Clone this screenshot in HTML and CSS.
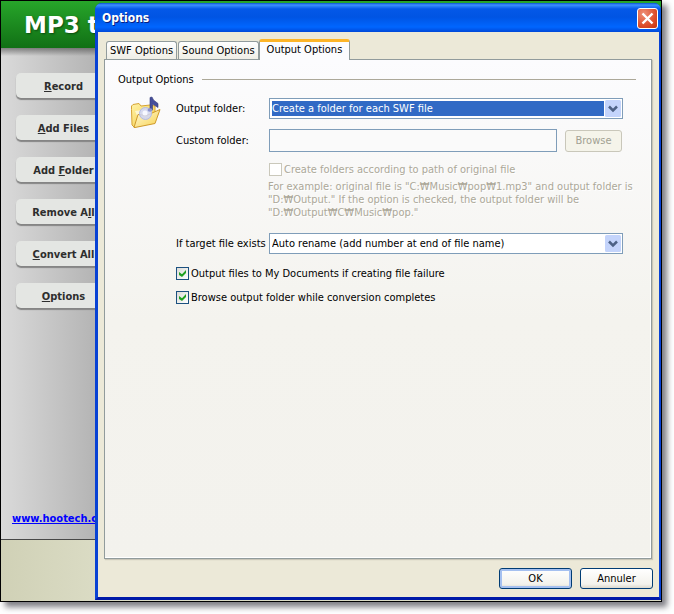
FILE: index.html
```html
<!DOCTYPE html>
<html lang="en">
<head>
<meta charset="utf-8">
<title>Options</title>
<link rel="stylesheet" href="styles.css">
</head>
<body>
<div class="app">
  <header class="app-header"><h1>MP3 t</h1></header>
  <aside class="sidebar">
    <nav class="actions">
      <button type="button"><u>R</u>ecord</button>
      <button type="button"><u>A</u>dd Files</button>
      <button type="button">Add <u>F</u>older</button>
      <button type="button">Remove A<u>l</u>l</button>
      <button type="button"><u>C</u>onvert All</button>
      <button type="button"><u>O</u>ptions</button>
    </nav>
    <a class="site-link" href="#">www.hootech.c</a>
  </aside>
  <footer class="app-footer"></footer>

  <section class="dialog" role="dialog" aria-labelledby="dialog-title">
    <div class="titlebar">
      <h2 id="dialog-title">Options</h2>
      <button class="close" type="button" aria-label="Close">
        <svg width="13" height="13" viewBox="0 0 13 13"><path d="M1.5 1.5 11.5 11.5M11.5 1.5 1.5 11.5" stroke="#fff" stroke-width="2.4" fill="none"/></svg>
      </button>
    </div>
    <form class="dialog-body">
      <div class="tabs" role="tablist">
        <button class="tab" type="button" role="tab">SWF Options</button>
        <button class="tab" type="button" role="tab">Sound Options</button>
        <button class="tab active" type="button" role="tab" aria-selected="true">Output Options</button>
      </div>
      <div class="panel" role="tabpanel">
        <h3 class="group-title">Output Options</h3>
        <div class="group">
          <svg class="folder" width="32" height="34" viewBox="0 0 32 34" aria-hidden="true">
            <defs>
              <linearGradient id="back" x1="0" y1="0" x2="1" y2="1"><stop offset="0" stop-color="#fff3a8"/><stop offset="1" stop-color="#f3c840"/></linearGradient>
              <linearGradient id="front" x1="0" y1="0" x2="1" y2="1"><stop offset="0" stop-color="#fffbe0"/><stop offset="1" stop-color="#f8d24c"/></linearGradient>
            </defs>
            <path d="M1.500 13.500V10L3 8.500 9 7.500 11 10 20 9 25 10V25L4 31 2 29Z" fill="url(#back)" stroke="#d6a334"/>
            <path d="M5 15 22 12.500V20L9 24Z" fill="#fdf6cf"/>
            <path d="M4 31.500 8 18.500 16.500 19.500 30 13.500 25 27.500 5 31.500Z" fill="url(#front)" stroke="#cf9a2b" stroke-linejoin="round"/>
            <circle cx="15.500" cy="17.500" r="6" fill="#cfd5f5" fill-opacity=".85" stroke="#b4bbe4"/>
            <circle cx="15" cy="17" r="2.500" fill="#f7f8ff"/>
            <path d="M20 14V1.500L22 1 23.500 4 28 7.500V11.500L22.500 8V14Z" fill="#454e9b" stroke="#343a78" stroke-width=".6"/>
            <ellipse cx="20" cy="14" rx="2.500" ry="1.800" fill="#8b93d0"/>
          </svg>
          <div class="rows">
            <div class="row">
              <label for="output">Output folder:</label>
              <span class="combo focused">
                <select id="output"><option>Create a folder for each SWF file</option></select>
                <svg width="16" height="17" viewBox="0 0 16 17" aria-hidden="true"><rect width="16" height="17" rx="1.500" fill="#c4d4fb"/><path d="M4 6.500 8 10.500 12 6.500" fill="none" stroke="#4d6185" stroke-width="2.500"/></svg>
              </span>
            </div>
            <div class="row custom">
              <label for="custom">Custom folder:</label>
              <span class="field-line">
                <input id="custom" class="textbox" type="text" disabled>
                <button class="browse" type="button" disabled>Browse</button>
              </span>
            </div>
            <div class="hint">
              <label class="check disabled"><input type="checkbox" disabled>Create folders according to path of original file</label>
              <p>For example: original file is "C:₩Music₩pop₩1.mp3" and output folder is<br>"D:₩Output." If the option is checked, the output folder will be<br>"D:₩Output₩C₩Music₩pop."</p>
            </div>
            <div class="row exists">
              <label for="exists">If target file exists</label>
              <span class="combo">
                <select id="exists"><option>Auto rename (add number at end of file name)</option></select>
                <svg width="16" height="17" viewBox="0 0 16 17" aria-hidden="true"><rect width="16" height="17" rx="1.500" fill="#c4d4fb"/><path d="M4 6.500 8 10.500 12 6.500" fill="none" stroke="#4d6185" stroke-width="2.500"/></svg>
              </span>
            </div>
            <div class="checks">
              <label class="check"><input type="checkbox" checked>Output files to My Documents if creating file failure</label>
              <label class="check"><input type="checkbox" checked>Browse output folder while conversion completes</label>
            </div>
          </div>
        </div>
      </div>
      <div class="buttons">
        <button class="push default" type="button">OK</button>
        <button class="push" type="button">Annuler</button>
      </div>
    </form>
  </section>
</div>
</body>
</html>
```
FILE: styles.css
```css
* { box-sizing: border-box; }

body {
  margin: 0;
  min-height: 100vh;
  display: flex;
  padding: 0 12px 12px 0;
  background: #fff;
  color: #000;
  font: 11px/13px "DejaVu Sans Condensed", Tahoma, sans-serif;
}

h1, h2, h3, p { margin: 0; }
button, input, select { font: inherit; color: inherit; margin: 0; }

.app {
  position: relative;
  flex: 1;
  display: flex;
  flex-direction: column;
  border: 1px solid #000;
  box-shadow: 5px 5px 6px rgba(40, 40, 50, 0.6);
}

.app-header {
  height: 47px;
  padding: 8px 23px;
  background: linear-gradient(#27a52a, #117015);
}

.app-header h1 {
  color: #fff;
  font: bold 23px/32px "DejaVu Sans", sans-serif;
  text-shadow: 1px 1px 2px #0b4a10;
}

.sidebar {
  flex: 1;
  display: flex;
  flex-direction: column;
  justify-content: space-between;
  align-items: flex-start;
  padding: 25px 11px 14px;
  background:
    linear-gradient(rgba(70, 70, 70, 0.6), transparent 8px),
    linear-gradient(90deg, #dadada, #b2b2b2 100px);
}

.actions {
  display: grid;
  gap: 17px;
  padding-left: 4px;
}

.actions button {
  width: 95px;
  height: 25px;
  padding: 2px 0 0;
  border: 0;
  border-radius: 5px;
  background: #e4e6e3;
  box-shadow: 0 2px 1px #858585;
  color: #2e2e2e;
  font-weight: bold;
}

.site-link { color: #00f; font-weight: bold; }

.app-footer {
  height: 62px;
  border-top: 1px solid #484848;
  background: linear-gradient(90deg, #d0d1b6, #dbdcc5 100px);
}

.dialog {
  position: absolute;
  inset: 2px 0 1px 94px;
  display: flex;
  flex-direction: column;
  border: solid #0842d4;
  border-width: 0 2px 3px 3px;
  border-bottom-color: #0019a8;
  border-radius: 7px 7px 0 0;
  background: #0842d4;
}

.titlebar {
  height: 29px;
  display: flex;
  align-items: center;
  justify-content: space-between;
  margin: 0 -2px 0 -3px;
  padding: 2px 3px 0 7px;
  border-radius: 7px 7px 0 0;
  background: linear-gradient(#0a50d0, #3c90ff 2px, #0458e8 6px, #0054e3 14px, #0066ff 24px, #0048d8);
}

.titlebar h2 {
  color: #fff;
  font-size: 12px;
  text-shadow: 1px 1px 0 #0a1f80;
}

.close {
  display: grid;
  place-items: center;
  width: 21px;
  height: 21px;
  padding: 0;
  border: 1px solid #fff;
  border-radius: 3px;
  background: radial-gradient(circle at 30% 25%, #ee9078, #dd4e2b 60%, #c43510);
}

.dialog-body {
  flex: 1;
  display: flex;
  flex-direction: column;
  padding: 7px 6px 8px;
  background: #ece9d8;
}

.tabs {
  display: flex;
  align-items: flex-end;
  padding-left: 2px;
}

.tab {
  height: 18px;
  padding: 0 3px;
  margin-right: 1px;
  border: 1px solid #919b9c;
  border-bottom: 0;
  border-radius: 3px 3px 0 0;
  background: linear-gradient(#fff, #efeee6);
  white-space: nowrap;
}

.tab.active {
  z-index: 1;
  height: 21px;
  margin: 0 0 -1px -1px;
  padding: 0 7px 4px;
  border-top: 3px solid #fdb528;
  background: #fcfcfe;
}

.panel {
  flex: 1;
  margin-right: 1px;
  padding: 13px 15px 13px 13px;
  border: 1px solid #919b9c;
  box-shadow: 1px 1px 1px #c9c6b8, inset -1px -1px #fff;
  background: linear-gradient(#fcfcfe, #f4f3ee 260px, #f3f2ed);
}

.group-title {
  display: flex;
  align-items: center;
  gap: 8px;
  font-size: 11px;
  font-weight: normal;
}

.group-title::after {
  content: "";
  flex: 1;
  height: 1px;
  background: #aca899;
}

.group {
  display: flex;
  gap: 14px;
  padding: 12px 13px 0 12px;
}

.folder { flex: none; margin-top: -2px; }
.rows { flex: 1; min-width: 0; }

.row {
  display: grid;
  grid-template-columns: 93px minmax(0, 1fr);
  align-items: center;
}

.row > label { white-space: nowrap; }
.custom { margin-top: 10px; }
.exists { margin-top: 14px; }

.combo { position: relative; display: block; }

.combo select {
  appearance: none;
  display: block;
  width: 100%;
  height: 21px;
  padding: 2px 18px 2px 2px;
  border: 1px solid #7f9db9;
  border-radius: 0;
  background: #fff;
  outline: 0;
}

.combo.focused select {
  color: #fff;
  background: linear-gradient(#316ac5, #316ac5) content-box, #fff;
}

.combo svg {
  position: absolute;
  top: 2px;
  right: 2px;
  pointer-events: none;
}

.field-line { display: flex; align-items: center; gap: 8px; padding-right: 1px; }

.textbox {
  flex: 1;
  min-width: 0;
  height: 23px;
  border: 1px solid #7f9db9;
  background: #fafafa;
}

.browse {
  width: 57px;
  height: 22px;
  padding: 0;
  border: 1px solid #c9c7ba;
  border-radius: 3px;
  background: #f5f4ea;
  color: #a1a192;
}

.hint {
  padding: 11px 0 0 93px;
  color: #aca899;
  text-shadow: 1px 1px 0 #fff;
  white-space: nowrap;
}

.hint p { margin-top: 4px; margin-left: -1px; }

.check { display: flex; align-items: center; gap: 2px; white-space: nowrap; }

.check input {
  appearance: none;
  flex: none;
  display: grid;
  place-items: center;
  width: 13px;
  height: 13px;
  border: 1px solid #1c5180;
  background: linear-gradient(135deg, #dcdcd7, #fff);
}

.check input:disabled { border-color: #cac8bb; background: #fff; }

.check input:checked::after {
  content: "";
  width: 7px;
  height: 7px;
  background: #21a121;
  clip-path: polygon(0 29%, 43% 60%, 100% 0, 100% 43%, 43% 100%, 0 70%);
}

.checks { display: grid; gap: 11px; margin-top: 13px; }

.buttons {
  display: flex;
  justify-content: flex-end;
  gap: 8px;
  margin-top: 9px;
}

.push {
  width: 73px;
  height: 21px;
  padding: 0;
  border: 1px solid #003c74;
  border-radius: 3px;
  background: linear-gradient(#fff, #f3f2ec 80%, #dcd8cd);
}

.push.default { box-shadow: inset 0 0 0 2px #a5c0f0; }
```
